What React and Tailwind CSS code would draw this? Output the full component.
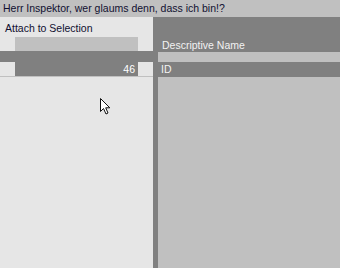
import React from "react";

const font = { fontFamily: '"Liberation Sans", Arial, sans-serif' };

const Cursor = () => (
  <svg
    className="absolute left-[99px] top-[97px]"
    width="13"
    height="19"
    viewBox="0 0 13 19"
  >
    <path
      d="M1.5 1.5 L1.5 14.5 L4.5 11.5 L7 17 L9 16 L6.7 10.8 L10.8 10.8 Z"
      fill="#ffffff"
      stroke="#111111"
      strokeWidth="1"
      strokeLinejoin="round"
    />
  </svg>
);

export default function App() {
  return (
    <div
      className="relative w-[340px] h-[268px] flex flex-col bg-[#c0c0c0] text-[10.5px] overflow-hidden"
      style={font}
    >
      <div className="h-[17px] shrink-0 bg-[#c0c0c0] text-[#101030] pl-[3px] leading-[17px]">
        Herr Inspektor, wer glaums denn, dass ich bin!?
      </div>
      <div className="flex flex-1 min-h-0">
        <div className="w-[153px] bg-[#e6e6e6] flex flex-col">
          <div className="h-[20px] pl-[5px] pt-[4px] leading-[14px] text-[#101030]">
            Attach to Selection
          </div>
          <div className="h-[14px] mx-[15px] bg-[#c0c0c0]" />
          <div className="h-[11px] bg-[#808080]" />
          <div className="h-[14px] mx-[15px] bg-[#808080] text-white text-right pr-[3px] leading-[15px]">
            46
          </div>
          <div className="h-px bg-[#c0c0c0]" />
        </div>
        <div className="w-[5px] bg-[#808080]" />
        <div className="flex-1 flex flex-col bg-[#c0c0c0]">
          <div className="h-[35px] bg-[#808080] text-[#f2f2f2] pl-[4px] flex items-end pb-0 leading-[14px]">
            Descriptive Name
          </div>
          <div className="h-[10px]" />
          <div className="h-[15px] bg-[#808080] text-[#f2f2f2] pl-[3px] leading-[15px]">
            ID
          </div>
        </div>
      </div>
      <Cursor />
    </div>
  );
}
